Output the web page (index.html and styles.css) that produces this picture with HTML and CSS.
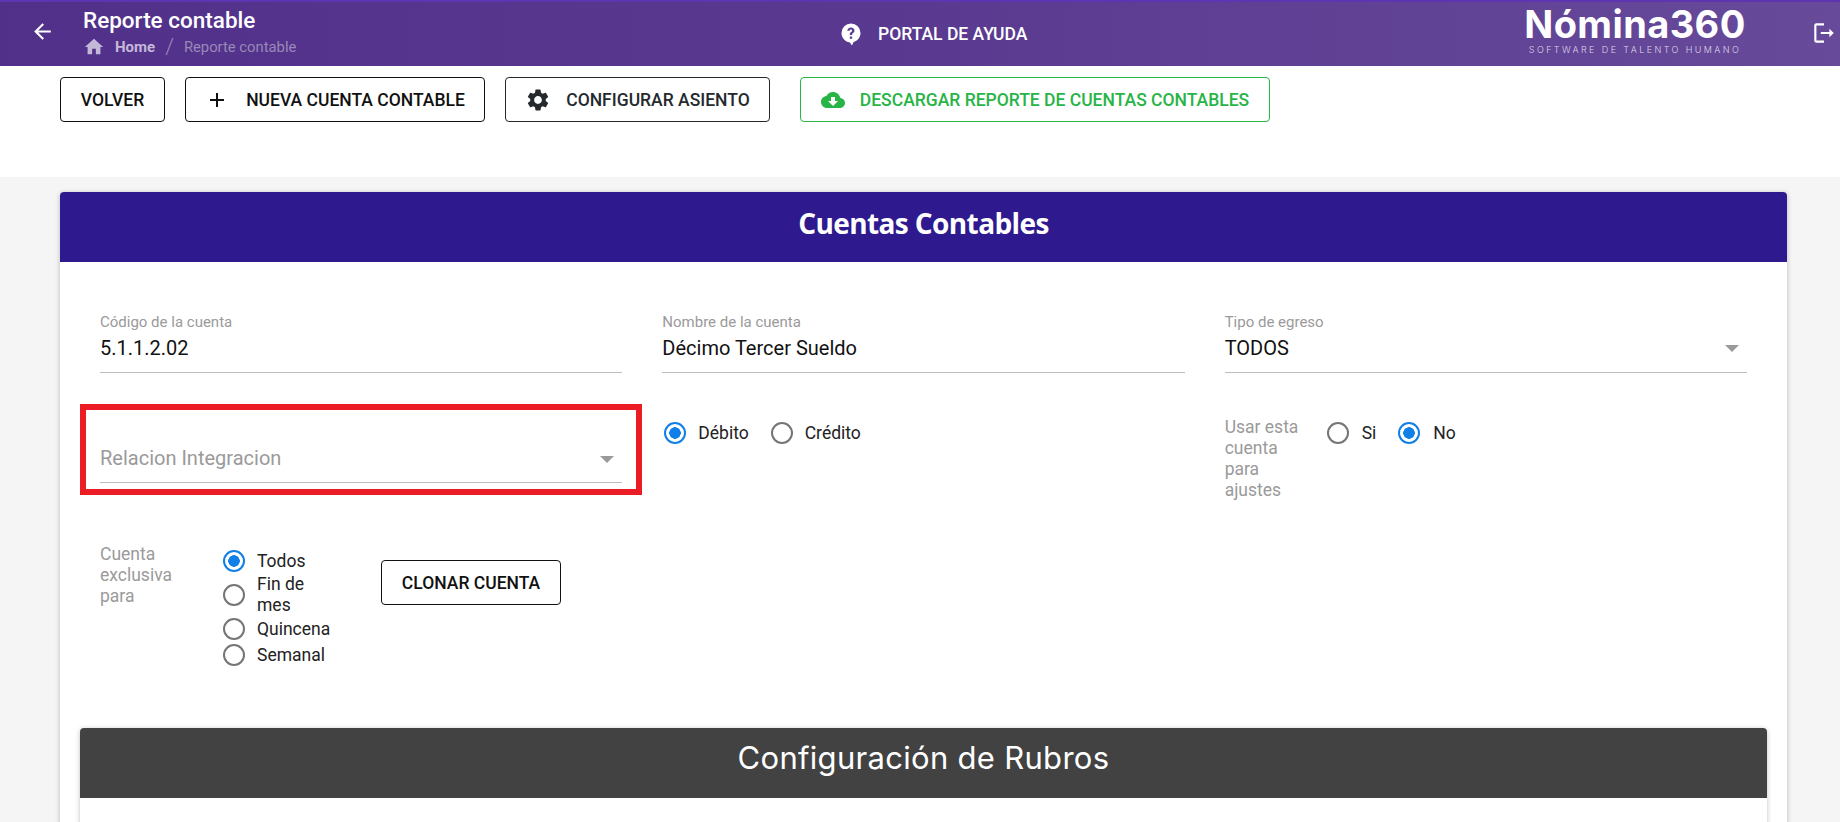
FILE: index.html
```html
<!DOCTYPE html>
<html lang="es">
<head>
<meta charset="utf-8">
<title>Reporte contable</title>
<link rel="stylesheet" href="styles.css">
</head>
<body>
<header class="topbar">
  <svg class="back" viewBox="0 0 24 24"><path d="M20 11H7.83l5.59-5.59L12 4l-8 8 8 8 1.41-1.41L7.83 13H20v-2z"/></svg>
  <div class="crumbs">
    <div class="page-title">Reporte contable</div>
    <div class="trail">
      <svg class="home" viewBox="0 0 24 24"><path d="M10 20v-6h4v6h5v-8h3L12 3 2 12h3v8z"/></svg>
      <span class="trail-home">Home</span>
      <span class="trail-sep">/</span>
      <span class="trail-page">Reporte contable</span>
    </div>
  </div>
  <div class="help">
    <svg class="help-icon" viewBox="0 0 24 24"><path fill-rule="evenodd" d="M12 1.5a9.5 9.5 0 0 0-9.5 9.5c0 4.9 3.7 8.9 8.4 9.4L13 23.500l1.600-3.400c4-1.100 6.900-4.800 6.900-9.100A9.500 9.500 0 0 0 12 1.500zm1.100 15.300h-2.300v-2.300h2.300v2.300zm2.300-7.300c-.3.800-1 1.300-1.600 1.800-.6.500-.8.800-.7 1.700h-2.300c-.1-1.500.3-2.200 1.200-2.900.7-.5 1.200-.9 1.100-1.600-.1-.6-.6-1-1.200-1-.7 0-1.200.5-1.300 1.300H8.300c.1-2.100 1.700-3.400 3.600-3.400 1.300 0 2.500.500 3.100 1.600.4.700.6 1.600.4 2.500z"/></svg>
    <span>PORTAL DE AYUDA</span>
  </div>
  <div class="logo">
    <div class="logo-name">Nómina360</div>
    <div class="logo-sub">SOFTWARE DE TALENTO HUMANO</div>
  </div>
  <svg class="logout" viewBox="0 0 24 24"><path d="M5 5h7V3H5a2 2 0 0 0-2 2v14c0 1.100.9 2 2 2h7v-2H5V5zm16 7l-4-4v3H9v2h8v3l4-4z"/></svg>
</header>

<section class="toolbar">
  <button class="btn btn-volver">VOLVER</button>
  <button class="btn btn-nueva"><svg class="btn-icon plus" viewBox="0 0 24 24"><path d="M19 13h-6v6h-2v-6H5v-2h6V5h2v6h6v2z"/></svg>NUEVA CUENTA CONTABLE</button>
  <button class="btn btn-config"><svg class="btn-icon gear" viewBox="0 0 24 24"><path d="M19.140 12.940c.04-.3.06-.61.06-.94 0-.32-.02-.64-.07-.94l2.030-1.580a.49.49 0 0 0 .12-.61l-1.920-3.320a.488.488 0 0 0-.59-.22l-2.390.96c-.5-.38-1.030-.7-1.620-.94l-.36-2.540a.484.484 0 0 0-.48-.41h-3.840c-.24 0-.43.17-.47.41l-.36 2.540c-.59.24-1.130.57-1.620.94l-2.390-.96c-.22-.08-.47 0-.59.22L2.740 8.870c-.12.21-.08.47.12.61l2.030 1.580c-.05.3-.09.63-.09.94s.02.64.07.94l-2.030 1.580a.49.49 0 0 0-.12.61l1.920 3.320c.12.22.37.29.59.22l2.390-.96c.5.38 1.030.7 1.620.94l.36 2.540c.05.24.24.41.48.41h3.840c.24 0 .44-.17.47-.41l.36-2.540c.59-.24 1.130-.56 1.620-.94l2.390.96c.22.08.47 0 .59-.22l1.920-3.320c.12-.22.07-.47-.12-.61l-2.010-1.580zM12 15.600c-1.980 0-3.600-1.620-3.600-3.600s1.620-3.600 3.600-3.600 3.600 1.620 3.600 3.600-1.620 3.600-3.600 3.600z"/></svg>CONFIGURAR ASIENTO</button>
  <button class="btn btn-green"><svg class="btn-icon cloud" viewBox="0 0 24 24"><path d="M19.350 10.040C18.670 6.590 15.640 4 12 4 9.110 4 6.600 5.640 5.350 8.040 2.340 8.360 0 10.910 0 14c0 3.310 2.690 6 6 6h13c2.760 0 5-2.240 5-5 0-2.640-2.050-4.780-4.650-4.960zM17 13l-5 5-5-5h3V9h4v4h3z"/></svg>DESCARGAR REPORTE DE CUENTAS CONTABLES</button>
</section>

<main class="card">
  <h1 class="card-head">Cuentas Contables</h1>
  <div class="form">
    <div class="col field">
      <div class="field-label">Código de la cuenta</div>
      <div class="field-value">5.1.1.2.02</div>
    </div>
    <div class="col field">
      <div class="field-label">Nombre de la cuenta</div>
      <div class="field-value">Décimo Tercer Sueldo</div>
    </div>
    <div class="col field">
      <div class="field-label">Tipo de egreso</div>
      <div class="field-value">TODOS<i class="caret"></i></div>
    </div>

    <div class="col highlight">
      <div class="field-value placeholder">Relacion Integracion<i class="caret"></i></div>
    </div>
    <div class="col radio-row-col">
      <div class="radio-row">
        <span class="radio on"></span><span class="radio-text">Débito</span>
        <span class="radio"></span><span class="radio-text">Crédito</span>
      </div>
    </div>
    <div class="col ajustes">
      <div class="muted ajustes-label">Usar esta cuenta para ajustes</div>
      <div class="radio-row">
        <span class="radio"></span><span class="radio-text">Si</span>
        <span class="radio on"></span><span class="radio-text">No</span>
      </div>
    </div>

    <div class="col exclusiva">
      <div class="muted exclusiva-label">Cuenta exclusiva para</div>
      <div class="radio-stack">
        <div class="stack-item"><span class="radio on"></span><span class="radio-text">Todos</span></div>
        <div class="stack-item"><span class="radio"></span><span class="radio-text">Fin de mes</span></div>
        <div class="stack-item"><span class="radio"></span><span class="radio-text">Quincena</span></div>
        <div class="stack-item"><span class="radio"></span><span class="radio-text">Semanal</span></div>
      </div>
      <button class="btn btn-clonar">CLONAR CUENTA</button>
    </div>
  </div>

  <section class="subcard">
    <h2 class="subcard-head">Configuración de Rubros</h2>
    <div class="subcard-body"></div>
  </section>
</main>
</body>
</html>
```
FILE: styles.css
```css
* { box-sizing: border-box; }
html, body { height: 100%; }
body {
  margin: 0;
  background: #f5f5f5;
  font-family: Roboto, "Liberation Sans", sans-serif;
  overflow: hidden;
  color: #111;
}

/* top bar */
.topbar {
  height: 66px;
  display: flex;
  align-items: center;
  background: linear-gradient(90deg, #51308a 0%, #5a3a90 50%, #674a9a 100%);
  border-top: 2px solid #5e35b1;
  color: #fff;
}
.back { width: 25px; height: 25px; fill: #fff; margin: -5px 0 0 30px; flex: none; }
.crumbs { margin-left: 28px; width: 728px; margin-top: -2px; }
.page-title { font-size: 22.5px; font-weight: 500; line-height: 24px; margin-top: -2px; }
.trail { display: flex; align-items: center; font-size: 15px; line-height: 20px; height: 20px; margin-top: 5px; }
.home { width: 22px; height: 22px; fill: #c4b8d8; margin-left: 0; }
.trail-home { font-weight: 700; color: #c4b8d8; margin-left: 10px; }
.trail-sep { color: #9a88b8; font-size: 22px; font-weight: 300; margin-left: 10px; }
.trail-page { color: #9a88b8; margin-left: 10px; font-size: 14.8px; }
.help { display: flex; align-items: center; margin-left: 28px; font-size: 17.5px; font-weight: 500; }
.help-icon { width: 24px; height: 24px; fill: #fff; margin-right: 15px; }
.logo { margin-left: auto; width: 224px; text-align: center; margin-top: -8px; }
.logo-name { font-family: Inter, "Open Sans", sans-serif; font-size: 38px; font-weight: 700; line-height: 39px; letter-spacing: 0.4px; white-space: nowrap; }
.logo-sub { font-family: Inter, sans-serif; font-size: 9px; font-weight: 300; letter-spacing: 2.4px; color: #dcd4ea; line-height: 11px; white-space: nowrap; }
.logout { width: 26px; height: 26px; fill: #fff; margin: -3px 3px 0 64px; flex: none; }

/* toolbar */
.toolbar {
  height: 111px;
  background: #fff;
  display: flex;
  align-items: flex-start;
  padding: 11px 60px 0;
}
.btn {
  height: 45px;
  display: inline-flex;
  align-items: center;
  justify-content: center;
  background: #fff;
  border: 1px solid #111;
  border-radius: 4px;
  font-family: Roboto, sans-serif;
  font-size: 17.5px;
  font-weight: 500;
  color: #111;
  padding: 0;
  white-space: nowrap;
}
.btn-volver { width: 105px; }
.btn-nueva { width: 300px; margin-left: 20px; }
.btn-config { width: 265px; margin-left: 20px; color: #24292e; border-color: #24292e; }
.btn-green { width: 470px; margin-left: 30px; color: #28b446; border-color: #28b446; }
.btn-icon { flex: none; }
.plus { width: 24px; height: 24px; fill: #111; margin-right: 17px; }
.gear { width: 26px; height: 26px; fill: #24292e; margin-right: 15px; }
.cloud { width: 24px; height: 24px; fill: #28b446; margin-right: 15px; }

/* card */
.card {
  margin: 15px 53px 0 60px;
  background: #fff;
  border-radius: 4px;
  box-shadow: 0 1px 5px rgba(0, 0, 0, .25);
  height: 900px;
}
.card-head {
  margin: 0;
  height: 70px;
  padding-bottom: 9px;
  background: #2e1a8e;
  border-radius: 4px 4px 0 0;
  color: #fff;
  font-family: "Open Sans", sans-serif;
  font-size: 28px;
  font-weight: 700;
  letter-spacing: -0.6px;
  display: flex;
  align-items: center;
  justify-content: center;
}

/* form */
.form {
  display: grid;
  grid-template-columns: repeat(3, 1fr);
  grid-template-rows: 92px 140px 184px;
  padding: 50px 20px 0;
  height: 466px;
}
.col { padding: 0 20px; min-width: 0; }
.field-label { font-size: 15px; color: #9a9a9a; line-height: 20px; }
.field-value {
  position: relative;
  font-size: 20px;
  line-height: 24px;
  height: 41px;
  padding-top: 4px;
  border-bottom: 1px solid #bdbdbd;
  color: #111;
}
.caret {
  position: absolute;
  right: 8px;
  top: 13px;
  width: 0;
  height: 0;
  border: 7px solid transparent;
  border-top: 7px solid #9a9a9a;
  border-bottom: 0;
}
.muted { font-size: 17.5px; line-height: 21px; color: #9a9a9a; }
.highlight {
  border: 6px solid #ec1c24;
  padding: 36px 14px 0;
  height: 91px;
}
.placeholder { color: #9a9a9a; height: 37px; padding-top: 0; }
.placeholder .caret { top: 10px; }

.radio-row-col { padding-top: 17px; }
.radio-row-col .radio-row { margin-left: 2px; }
.radio-row { display: flex; align-items: center; height: 24px; }
.radio {
  width: 22px;
  height: 22px;
  flex: none;
  border: 2px solid #757575;
  border-radius: 50%;
  background: #fff;
}
.radio.on {
  border-color: #1080e8;
  background: radial-gradient(circle, #1080e8 0 5.500px, #fff 6px);
}
.radio-text { font-size: 17.5px; line-height: 21px; margin-left: 12px; margin-right: 22px; color: #222; }

.ajustes { display: flex; padding-top: 13px; }
.ajustes-label { width: 102px; padding-right: 20px; flex: none; }
.ajustes .radio-row { margin-top: 4px; }
.ajustes .radio-text { margin-left: 13px; }

.exclusiva { display: flex; align-items: flex-start; }
.exclusiva-label { width: 123px; padding-right: 30px; flex: none; }
.radio-stack { width: 127px; flex: none; margin-top: 4px; }
.stack-item { display: flex; align-items: center; min-height: 26px; }
.stack-item .radio-text { margin-right: 0; line-height: 21px; width: 72px; }
.btn-clonar { width: 180px; margin-left: 31px; margin-top: 16px; flex: none; }

/* sub card */
.subcard {
  margin: 0 20px;
  background: #fff;
  border-radius: 4px;
  box-shadow: 0 1px 5px rgba(0, 0, 0, .25);
}
.subcard-head {
  margin: 0;
  height: 70px;
  padding-bottom: 12px;
  background: #424242;
  border-radius: 4px 4px 0 0;
  color: #fff;
  font-family: Inter, sans-serif;
  font-size: 31px;
  font-weight: 400;
  letter-spacing: 0.3px;
  display: flex;
  align-items: center;
  justify-content: center;
}
.subcard-body { height: 200px; }
```
